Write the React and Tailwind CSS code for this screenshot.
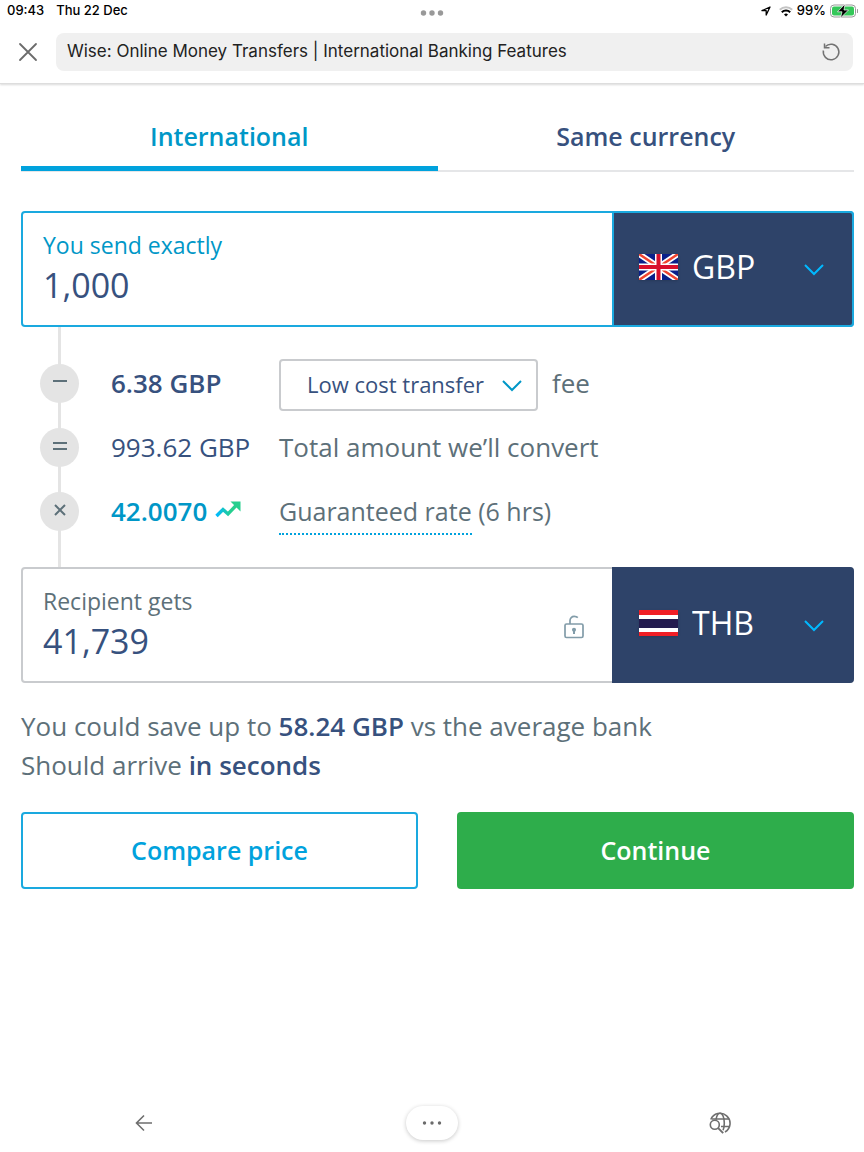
import React from 'react';

const Chevron = ({ className }) => (
  <svg viewBox="0 0 20 12" className={`pointer-events-none w-5 h-3 shrink-0 ${className}`} fill="none" stroke="currentColor" strokeWidth="2">
    <path d="M1 1l9 9 9-9" />
  </svg>
);

const FlagGB = () => (
  <svg viewBox="0 0 39 26" className="w-[39px] h-[26px] shrink-0 shadow">
    <rect width="39" height="26" fill="#0a1f8a" />
    <path d="M0 0l39 26M39 0L0 26" stroke="#fff" strokeWidth="6" />
    <path d="M0 0l39 26M39 0L0 26" stroke="#f0432f" strokeWidth="2.400" />
    <path d="M19.5 0v26M0 13h39" stroke="#fff" strokeWidth="7" />
    <path d="M19.5 0v26M0 13h39" stroke="#d80f2b" strokeWidth="4" />
  </svg>
);

const FlagTH = () => (
  <svg viewBox="0 0 39 26" className="w-[39px] h-[26px] shrink-0 shadow">
    <rect width="39" height="26" fill="#f01e25" />
    <rect y="5" width="39" height="17" fill="#fff" />
    <rect y="9" width="39" height="9" fill="#241c4f" />
  </svg>
);

const TrendUp = () => (
  <svg viewBox="0 0 26 17" className="w-[26px] h-[17px] mb-1">
    <defs>
      <linearGradient id="trend" x1="0" y1="0" x2="1" y2="0">
        <stop offset="0" stopColor="#00b9ff" />
        <stop offset="0.7" stopColor="#26cf8e" />
      </linearGradient>
    </defs>
    <path d="M1.500 15L8 8.500l5 4.500 9-9.500" fill="none" stroke="url(#trend)" strokeWidth="3.400" />
    <path d="M15.500.5H25.500V10.500z" fill="#26cf8e" />
  </svg>
);

const PadlockOpen = () => (
  <svg viewBox="0 0 20 24" className="w-5 h-6 shrink-0" fill="none" stroke="#829ca9" strokeWidth="1.700">
    <rect x="1" y="9" width="18" height="13.500" rx="1.500" />
    <path d="M6 9V5.500a4.200 4.200 0 0 1 4.200-4.200c1.500 0 2.800.4 3.600 1.300" />
    <path d="M10 15v4" strokeWidth="2" />
    <circle cx="10" cy="14.800" r="1.200" fill="#829ca9" />
  </svg>
);

const signs = {
  minus: 'M1 6h14',
  equals: 'M1 4h14M1 10h14',
  times: 'M3 2l10 10M13 2L3 12',
};

const Step = ({ sign, amount, children }) => (
  <li className="relative flex items-center h-16">
    <span className="flex items-center justify-center w-[39px] h-[39px] rounded-full bg-[#e4e4e4] shrink-0">
      <svg viewBox="0 0 16 14" className="w-4 h-3.5 mb-0.5" stroke="#5d7079" strokeWidth="2">
        <path d={signs[sign]} />
      </svg>
    </span>
    <span className="flex items-center gap-2 w-[168px] ml-8 shrink-0">{amount}</span>
    <span className="flex items-center">{children}</span>
  </li>
);

const CurrencyBox = ({ id, label, value, currency, flag, active, icon }) => (
  <div className={`flex h-[116px] rounded border-2 ${active ? 'border-[#1aa9df]' : 'border-[#c9cbce]'}`}>
    <div className="flex flex-1 items-center min-w-0 pt-1 pl-5 pr-7">
      <div className="flex-1 min-w-0">
        <label htmlFor={id} className={`block text-[23px] leading-7 ${active ? 'text-[#0097c7]' : 'text-[#5d7079]'}`}>
          {label}
        </label>
        <input id={id} defaultValue={value} className="block w-full h-[52px] text-[34px] text-[#37517e] bg-transparent outline-none" />
      </div>
      {icon}
    </div>
    <div className={`flex items-center w-[242px] -my-0.5 -mr-0.5 pl-[25px] pr-7 pb-1 rounded-r bg-[#2e4369] border-2 shrink-0 ${active ? 'border-[#1aa9df]' : 'border-[#2e4369]'}`}>
      {flag}
      <select aria-label={`${label} currency`} defaultValue={currency} className="flex-1 min-w-0 ml-3.5 text-[32px] text-white bg-transparent appearance-none outline-none">
        <option>GBP</option>
        <option>THB</option>
      </select>
      <Chevron className="text-[#00b9ff] mt-1.5" />
    </div>
  </div>
);

const StatusBar = () => (
  <div className="grid grid-cols-3 items-center h-[22px] pl-[7px] pr-1.5 text-[13px] font-medium text-black">
    <div className="flex gap-3">
      <span>09:43</span>
      <span>Thu 22 Dec</span>
    </div>
    <svg viewBox="0 0 24 6" className="w-6 h-1.5 mt-1 justify-self-center" fill="#999">
      <circle cx="3.500" cy="3" r="2.700" />
      <circle cx="12" cy="3" r="2.700" />
      <circle cx="20.500" cy="3" r="2.700" />
    </svg>
    <div className="flex items-center justify-end gap-1">
      <svg viewBox="0 0 10 10" className="w-2.5 h-2.5 mr-1" fill="none" stroke="#000" strokeWidth="1.300" strokeLinejoin="round">
        <path d="M9 1L1 4.700h4.200V9z" />
      </svg>
      <svg viewBox="0 0 14 11" className="w-3.5 h-[11px]" fill="none" strokeWidth="2">
        <path d="M.8 3.800a8.800 8.800 0 0 1 12.400 0" stroke="#c4c4c4" />
        <path d="M2.800 6.300a6 6 0 0 1 8.400 0" stroke="#000" />
        <path d="M5 8.500a3 3 0 0 1 4 0L7 10.600z" fill="#000" />
      </svg>
      <span>99%</span>
      <svg viewBox="0 0 28 14" className="w-7 h-3.5">
        <rect x=".5" y="1" width="25" height="12" rx="3.500" fill="#fff" stroke="#999" />
        <rect x="2" y="2.500" width="22" height="9" rx="2" fill="#34c759" />
        <path d="M27 5v4a2 2 0 0 0 0-4z" fill="#999" />
        <path d="M15 0L7.500 7.800h4.500L10.500 14 18.500 6h-4.500z" fill="#000" stroke="#fff" strokeWidth=".7" />
      </svg>
    </div>
  </div>
);

const AddressBar = () => (
  <div className="flex items-center gap-[18px] pl-[18px] pr-[11px] pt-[11px] pb-3">
    <button type="button" aria-label="Close">
      <svg viewBox="0 0 20 20" className="w-5 h-5" stroke="#6b6b6b" strokeWidth="1.800" strokeLinecap="round">
        <path d="M2 2l16 16M18 2L2 18" />
      </svg>
    </button>
    <div className="flex flex-1 items-center justify-between h-[38px] pl-[11px] pr-3 rounded-lg bg-[#f0f0f0]">
      <span className="text-[17px] text-[#222]">
        Wise: Online Money Transfers | International Banking Features
      </span>
      <button type="button" aria-label="Reload">
        <svg viewBox="0 0 20 20" className="w-5 h-5" fill="none" stroke="#737373" strokeWidth="1.500">
          <path d="M4.400 4.600A7.800 7.800 0 1 1 2.400 8.500" />
          <path d="M3.500 1.500v4.200h5" />
        </svg>
      </button>
    </div>
  </div>
);

const BottomBar = () => (
  <nav className="grid grid-cols-3 items-center justify-items-center h-[58px]">
    <button type="button" aria-label="Back">
      <svg viewBox="0 0 18 18" className="w-[18px] h-[18px]" fill="none" stroke="#6e6e6e" strokeWidth="1.600">
        <path d="M17 9H1.500M9 1.500L1.500 9 9 16.500" />
      </svg>
    </button>
    <button type="button" aria-label="More" className="flex items-center justify-center w-[52px] h-[34px] rounded-full bg-white shadow-[0_1px_4px_rgba(0,0,0,0.22)]">
      <svg viewBox="0 0 20 4" className="w-5 h-1" fill="#6b6b6b">
        <circle cx="2.500" cy="2" r="1.700" />
        <circle cx="10" cy="2" r="1.700" />
        <circle cx="17.500" cy="2" r="1.700" />
      </svg>
    </button>
    <button type="button" aria-label="Search the web">
      <svg viewBox="0 0 22 22" className="w-[22px] h-[22px]" fill="none" stroke="#6e6e6e" strokeWidth="1.600">
        <path d="M1.800 7.500A10 10 0 1 1 16 20" />
        <path d="M7 7.500C7.600 3.800 9.100 1.200 11 1.200c2.500 0 4.300 4.300 4.300 9.800 0 3-.4 5.500-1.200 7.300" />
        <path d="M3 7h17M12 14.500h8.500" />
        <circle cx="5.800" cy="12.800" r="4.500" />
        <path d="M9.200 16.200l5 5" strokeWidth="1.900" />
      </svg>
    </button>
  </nav>
);

const App = () => (
  <div className="flex flex-col min-h-screen bg-white font-['Inter',sans-serif]">
    <header className="border-b border-[#ddd] shadow-[0_1px_2px_rgba(0,0,0,0.15)]">
      <StatusBar />
      <AddressBar />
    </header>

    <main className="flex-1 pl-[21px] pr-2.5 font-['Open_Sans',sans-serif]">
      <div role="tablist" className="flex h-[88px] border-b-2 border-[#e5e6e8] text-[25px] font-semibold">
        <button type="button" role="tab" aria-selected="true" className="flex-1 -mb-px pt-6 border-b-[5px] border-[#00a2dd] text-[#0097c7]">
          International
        </button>
        <button type="button" role="tab" aria-selected="false" className="flex-1 pt-5 text-[#37517e]">
          Same currency
        </button>
      </div>

      <form className="mt-[39px]">
        <CurrencyBox id="send" label="You send exactly" value="1,000" currency="GBP" flag={<FlagGB />} active />

        <ul className="relative py-6 pl-[19px] text-[26px] text-[#5d7079]">
          <li aria-hidden="true" className="absolute inset-y-0 left-[37px] w-[3px] bg-[#e4e4e4]" />
          <Step sign="minus" amount={<strong className="font-semibold text-[#37517e]">6.38 GBP</strong>}>
            <span className="relative flex items-center mt-1">
              <select aria-label="Transfer type" className="w-[259px] h-[52px] pl-[26px] pr-12 pb-0.5 rounded border-2 border-[#c9cbce] text-[22px] text-[#37517e] bg-white appearance-none outline-none">
                <option>Low cost transfer</option>
              </select>
              <Chevron className="absolute right-4 top-[21px] text-[#0097c7]" />
            </span>
            <span className="ml-3.5">fee</span>
          </Step>
          <Step sign="equals" amount={<span className="text-[#37517e]">993.62 GBP</span>}>
            Total amount we’ll convert
          </Step>
          <Step
            sign="times"
            amount={
              <>
                <strong className="font-semibold text-[#0097c7]">42.0070</strong>
                <TrendUp />
              </>
            }
          >
            <span className="mt-0.5 text-[25px]">
              <a href="#rate" className="inline-block leading-[44px] border-b-2 border-dotted border-[#00a2dd]">Guaranteed rate</a> (6 hrs)
            </span>
          </Step>
        </ul>

        <CurrencyBox id="receive" label="Recipient gets" value="41,739" currency="THB" flag={<FlagTH />} icon={<PadlockOpen />} />

        <div className="mt-6 text-[26px] leading-[39px] text-[#5d7079]">
          <p>
            You could save up to <strong className="font-semibold text-[#37517e]">58.24 GBP</strong> vs the average bank
          </p>
          <p>
            Should arrive <strong className="font-semibold text-[#37517e]">in seconds</strong>
          </p>
        </div>

        <div className="grid grid-cols-2 gap-[39px] mt-[27px] text-[25px] font-semibold">
          <button type="button" className="h-[77px] rounded border-2 border-[#1aa9df] text-[#00a2dd]">
            Compare price
          </button>
          <button type="button" className="h-[77px] rounded bg-[#2ead4b] text-white">
            Continue
          </button>
        </div>
      </form>
    </main>

    <BottomBar />
  </div>
);

export default App;
